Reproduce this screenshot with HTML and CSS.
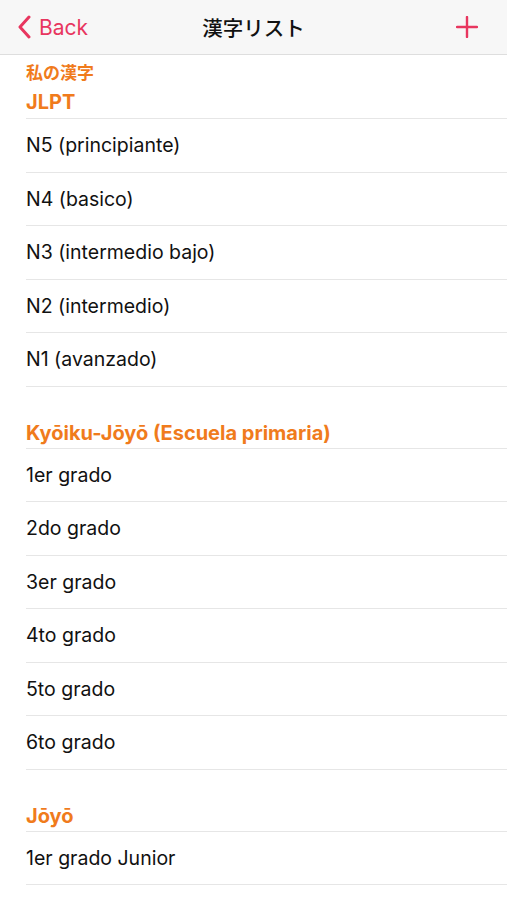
FILE: index.html
```html
<!DOCTYPE html>
<html lang="es">
<head>
<meta charset="utf-8">
<link rel="stylesheet" href="styles.css">
</head>
<body>
<header class="nav">
  <a class="back">
    <svg class="chev" width="14" height="24" viewBox="0 0 14 24"><path d="M12 2 L3 12 L12 22" fill="none" stroke="#e8365f" stroke-width="3" stroke-linecap="round" stroke-linejoin="round"/></svg>
    <span>Back</span>
  </a>
  <h1 class="title">漢字リスト</h1>
  <svg class="plus" width="22" height="22" viewBox="0 0 22 22"><path d="M11 1 V21 M1 11 H21" stroke="#e8365f" stroke-width="2.4" stroke-linecap="round"/></svg>
</header>
<main class="list">
  <div class="mine">私の漢字</div>
  <section class="group first">
    <h2 class="sect">JLPT</h2>
    <div class="row">N5 (principiante)</div>
    <div class="row">N4 (basico)</div>
    <div class="row">N3 (intermedio bajo)</div>
    <div class="row">N2 (intermedio)</div>
    <div class="row">N1 (avanzado)</div>
  </section>
  <section class="group">
    <h2 class="sect">Kyōiku-Jōyō (Escuela primaria)</h2>
    <div class="row">1er grado</div>
    <div class="row">2do grado</div>
    <div class="row">3er grado</div>
    <div class="row">4to grado</div>
    <div class="row">5to grado</div>
    <div class="row">6to grado</div>
  </section>
  <section class="group">
    <h2 class="sect">Jōyō</h2>
    <div class="row">1er grado Junior</div>
  </section>
</main>
</body>
</html>
```
FILE: styles.css
```css
* { box-sizing: border-box; }
html, body { margin: 0; padding: 0; background: #fff; }
body {
  width: 507px;
  height: 900px;
  overflow: hidden;
  font-family: "Inter", "Noto Sans CJK JP", sans-serif;
  color: #111;
}
.nav {
  height: 55px;
  background: #f7f7f7;
  border-bottom: 1px solid #dedede;
  display: grid;
  grid-template-columns: 1fr auto 1fr;
  align-items: center;
  padding: 0 17px;
}
.back {
  display: flex;
  align-items: center;
  gap: 8px;
  color: #e8365f;
  font-size: 21px;
  justify-self: start;
}
.chev { display: block; }
.title {
  margin: 0;
  font-size: 20.5px;
  font-weight: 500;
  font-family: "Noto Sans CJK JP", sans-serif;
  color: #111;
}
.plus { justify-self: end; display: block; margin-right: 12px; }
.list { padding-left: 26px; }
.mine {
  color: #f07b1c;
  font-weight: 700;
  font-size: 17px;
  font-family: "Noto Sans CJK JP", sans-serif;
  line-height: 22px;
  padding-top: 6px;
}
.group { margin-top: 24px; }
.group.first { margin-top: 0; }
.sect {
  margin: 0;
  color: #f07b1c;
  font-size: 20px;
  font-weight: 700;
  line-height: 24px;
  height: 38px;
  padding-top: 10px;
  border-bottom: 1px solid #e6e6e6;
}
.first .sect { height: 36px; padding-top: 7px; }
.row {
  height: 53.5px;
  display: flex;
  align-items: center;
  font-size: 19.5px;
  border-bottom: 1px solid #e6e6e6;
}
```
